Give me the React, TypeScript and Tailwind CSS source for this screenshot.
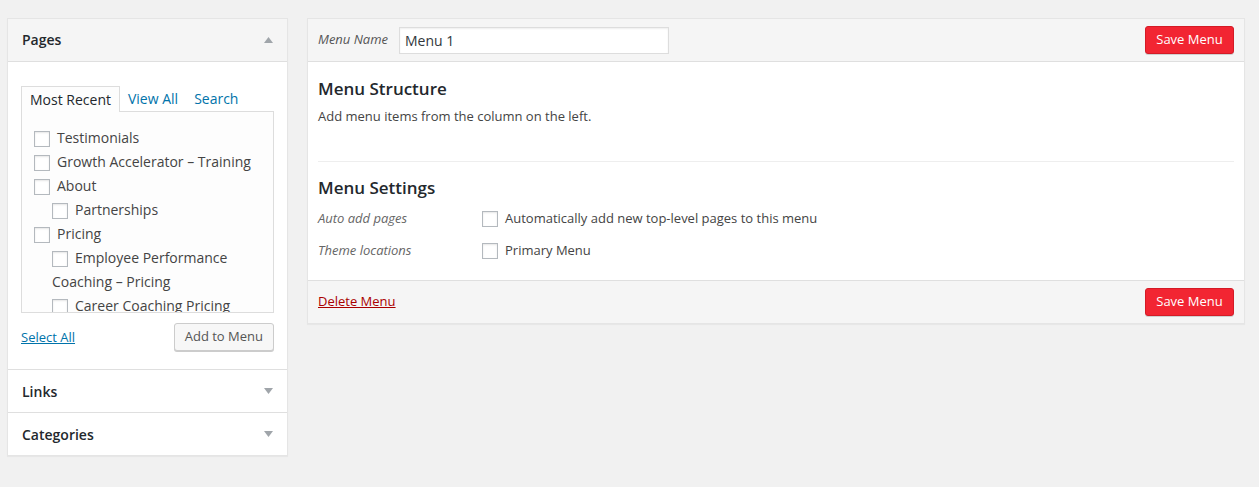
import React from 'react';

const font = { fontFamily: '"Open Sans", "Liberation Sans", sans-serif' };

function Checkbox() {
    return (
        <span className="inline-block w-4 h-4 bg-white border border-[#b4b9be] shadow-[inset_0_1px_2px_rgba(0,0,0,0.1)] align-middle" />
    );
}

function Arrow({ up }: { up?: boolean }) {
    return (
        <svg width="9" height="6" viewBox="0 0 9 6" className="text-[#a0a5aa]">
            {up ? <path d="M0 6 L4.5 0 L9 6 Z" fill="currentColor" /> : <path d="M0 0 L4.5 6 L9 0 Z" fill="currentColor" />}
        </svg>
    );
}

const pages: { label: string; level: number }[] = [
    { label: 'Testimonials', level: 0 },
    { label: 'Growth Accelerator – Training', level: 0 },
    { label: 'About', level: 0 },
    { label: 'Partnerships', level: 1 },
    { label: 'Pricing', level: 0 },
    { label: 'Employee Performance Coaching – Pricing', level: 1 },
    { label: 'Career Coaching Pricing', level: 1 },
];

function SaveButton() {
    return (
        <button className="h-[28px] w-[89px] rounded-[3px] bg-[#f22532] border border-[#d41b26] text-white text-[13px] shadow-[0_1px_0_rgba(0,0,0,0.15)]">
            Save Menu
        </button>
    );
}

export default function App() {
    return (
        <div className="min-h-[487px] bg-[#f1f1f1] text-[#444] flex items-start pt-[18px] pl-[7px] pr-[14px]" style={font}>
            {/* left column */}
            <div className="w-[281px] bg-white border border-[#e5e5e5] shadow-[0_1px_1px_rgba(0,0,0,0.04)]">
                <div className="h-[43px] bg-[#f5f5f5] border-b border-[#dfdfdf] flex items-center justify-between pl-[14px] pr-[14px] pb-[1px]">
                    <h3 className="text-[14px] font-semibold text-[#23282d]">Pages</h3>
                    <Arrow up />
                </div>
                <div className="px-[13px] pt-[24px] pb-[18px]">
                    <div className="flex text-[14px] h-[25px] leading-[25px]">
                        <span className="px-[8px] border border-b-0 border-[#ddd] bg-[#fdfdfd] text-[#23282d] relative z-10 h-[26px]">Most Recent</span>
                        <span className="px-[8px] text-[#0073aa]">View All</span>
                        <span className="px-[8px] text-[#0073aa]">Search</span>
                    </div>
                    <div className="h-[202px] border border-[#ddd] bg-[#fdfdfd] overflow-hidden pt-[14px] pl-[12px] pr-[8px]">
                        <ul className="text-[14px] leading-[24px] text-[#444]">
                            {pages.map((p) => (
                                <li key={p.label} className={p.level ? 'ml-[18px]' : ''}>
                                    <Checkbox />
                                    <span className="ml-[7px]">{p.label}</span>
                                </li>
                            ))}
                        </ul>
                    </div>
                    <div className="flex items-center justify-between mt-[10px]">
                        <a className="text-[13px] leading-[18px] text-[#0073aa] underline">Select All</a>
                        <button className="h-[28px] px-[10px] text-[13px] text-[#555] bg-[#f7f7f7] border border-[#ccc] rounded-[3px] shadow-[0_1px_0_#ccc]">
                            Add to Menu
                        </button>
                    </div>
                </div>
                <div className="h-[43px] border-t border-[#dfdfdf] flex items-center justify-between px-[14px]">
                    <h3 className="text-[14px] font-semibold text-[#23282d]">Links</h3>
                    <Arrow />
                </div>
                <div className="h-[43px] border-t border-[#dfdfdf] flex items-center justify-between px-[14px]">
                    <h3 className="text-[14px] font-semibold text-[#23282d]">Categories</h3>
                    <Arrow />
                </div>
            </div>

            {/* right column */}
            <div className="flex-1 ml-[19px] bg-white border border-[#e5e5e5] shadow-[0_1px_1px_rgba(0,0,0,0.04)]">
                <div className="h-[43px] bg-[#f5f5f5] border-b border-[#dfdfdf] flex items-center justify-between px-[10px]">
                    <div className="flex items-center">
                        <label className="text-[13px] italic text-[#555] w-[81px]">Menu Name</label>
                        <div className="w-[270px] h-[27px] bg-white border border-[#ddd] shadow-[inset_0_1px_2px_rgba(0,0,0,0.07)] flex items-center px-[5px] text-[14px] text-[#32373c]">
                            Menu 1
                        </div>
                    </div>
                    <SaveButton />
                </div>
                <div className="px-[10px]">
                    <div className="pt-[15px] pb-[35px] border-b border-[#eee]">
                        <h3 className="text-[17px] font-semibold text-[#23282d] leading-[24px]">Menu Structure</h3>
                        <p className="text-[13px] text-[#444] mt-[5px] leading-[20px]">Add menu items from the column on the left.</p>
                    </div>
                    <div className="pt-[14px] pb-[13px]">
                        <h3 className="text-[17px] font-semibold text-[#23282d] leading-[24px]">Menu Settings</h3>
                        <div className="mt-[3px] flex items-center h-[32px]">
                            <span className="w-[164px] text-[13px] italic text-[#666]">Auto add pages</span>
                            <Checkbox />
                            <span className="ml-[7px] text-[13px]">Automatically add new top-level pages to this menu</span>
                        </div>
                        <div className="flex items-center h-[32px]">
                            <span className="w-[164px] text-[13px] italic text-[#666]">Theme locations</span>
                            <Checkbox />
                            <span className="ml-[7px] text-[13px]">Primary Menu</span>
                        </div>
                    </div>
                </div>
                <div className="h-[43px] bg-[#f5f5f5] border-t border-[#dfdfdf] flex items-center justify-between px-[10px]">
                    <a className="text-[13px] text-[#a00] underline">Delete Menu</a>
                    <SaveButton />
                </div>
            </div>
        </div>
    );
}
